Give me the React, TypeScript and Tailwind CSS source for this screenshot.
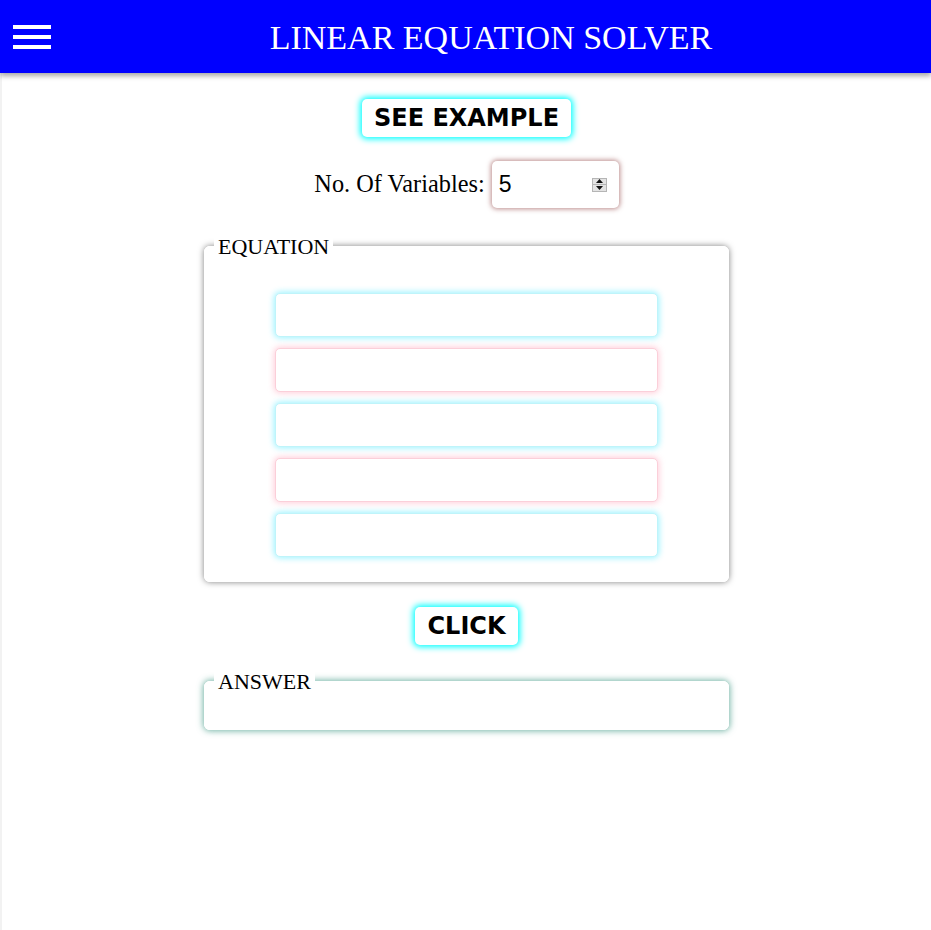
const serif = "font-['Liberation_Serif','Times_New_Roman',serif]";
const boldSans = "font-['DejaVu_Sans',Verdana,sans-serif] font-bold";

const Header = () => (
  <header className="flex h-[73px] items-center bg-[#0000ff] shadow-[0_3px_5px_rgba(0,0,0,0.35)] relative z-10">
    <div className="ml-[13px] flex w-[38px] flex-col gap-[6px]">
      <span className="block h-[4px] bg-white"></span>
      <span className="block h-[4px] bg-white"></span>
      <span className="block h-[4px] bg-white"></span>
    </div>
    <h1 className={`${serif} flex-1 pt-[2px] text-center text-[34px] leading-none text-white`}>
      LINEAR EQUATION SOLVER
    </h1>
  </header>
);

const GlowButton = ({ label }: { label: string }) => (
  <button
    className={`${boldSans} rounded-[5px] bg-white px-[12px] py-[4px] text-[24px] leading-[30px] text-black shadow-[0_0_6px_2px_#00ffff]`}
  >
    {label}
  </button>
);

// small up/down box like the old browser number spinner
const Spinner = () => (
  <div className="flex h-[14px] w-[15px] flex-col border border-[#b5b5b5] bg-[#e3e3e3]">
    <div className="flex flex-1 items-center justify-center border-b border-[#b5b5b5]">
      <svg width="7" height="4" viewBox="0 0 7 4">
        <path d="M0 4 L3.5 0 L7 4 Z" fill="#111" />
      </svg>
    </div>
    <div className="flex flex-1 items-center justify-center">
      <svg width="7" height="4" viewBox="0 0 7 4">
        <path d="M0 0 L3.5 4 L7 0 Z" fill="#111" />
      </svg>
    </div>
  </div>
);

const EquationInput = ({ tone }: { tone: "cyan" | "pink" }) => (
  <input
    type="text"
    className={
      tone === "cyan"
        ? "h-[44px] w-[383px] rounded-[5px] border border-[#bff4fa] bg-white shadow-[0_0_6px_1px_rgba(0,225,255,0.4)] outline-none"
        : "h-[44px] w-[383px] rounded-[5px] border border-[#fbcfd9] bg-white shadow-[0_0_6px_1px_rgba(255,130,160,0.4)] outline-none"
    }
  />
);

export default function App() {
  const rows: ("cyan" | "pink")[] = ["cyan", "pink", "cyan", "pink", "cyan"];
  return (
    <div className="min-h-[930px] bg-white">
      <Header />
      <main className="flex min-h-[857px] flex-col items-center border-l-2 border-[#f2f2f2] pt-[26px]">
        <GlowButton label="SEE EXAMPLE" />

        <div className="mt-[24px] flex items-center gap-[7px]">
          <label className={`${serif} text-[24.3px] text-black`}>No. Of Variables:</label>
          <div className="flex h-[47px] w-[127px] items-center rounded-[5px] bg-white pl-[7px] pr-[12px] shadow-[0_0_5px_1px_rgba(170,110,110,0.8)]">
            <input
              type="text"
              defaultValue="5"
              className="w-0 flex-1 bg-transparent font-['Liberation_Sans',Arial,sans-serif] text-[23px] text-black outline-none"
            />
            <Spinner />
          </div>
        </div>

        <fieldset className="mt-[26px] h-[348px] w-[525px] rounded-[6px] border border-white bg-white px-0 pb-[25px] pt-[34px] shadow-[0_0_6px_rgba(0,0,0,0.5)]">
          <legend className={`${serif} ml-[9px] bg-white px-[4px] text-[22px] leading-[25px] text-black`}>
            EQUATION
          </legend>
          <div className="flex flex-col items-center gap-[11px]">
            {rows.map((t, i) => (
              <EquationInput key={i} tone={t} />
            ))}
          </div>
        </fieldset>

        <div className="mt-[25px]">
          <GlowButton label="CLICK" />
        </div>

        <fieldset className="mt-[24px] h-[61px] w-[525px] rounded-[6px] border border-white bg-white shadow-[0_0_6px_1px_rgba(60,150,130,0.7)]">
          <legend className={`${serif} ml-[9px] bg-white px-[4px] text-[22px] leading-[25px] text-black`}>
            ANSWER
          </legend>
        </fieldset>
      </main>
    </div>
  );
}
